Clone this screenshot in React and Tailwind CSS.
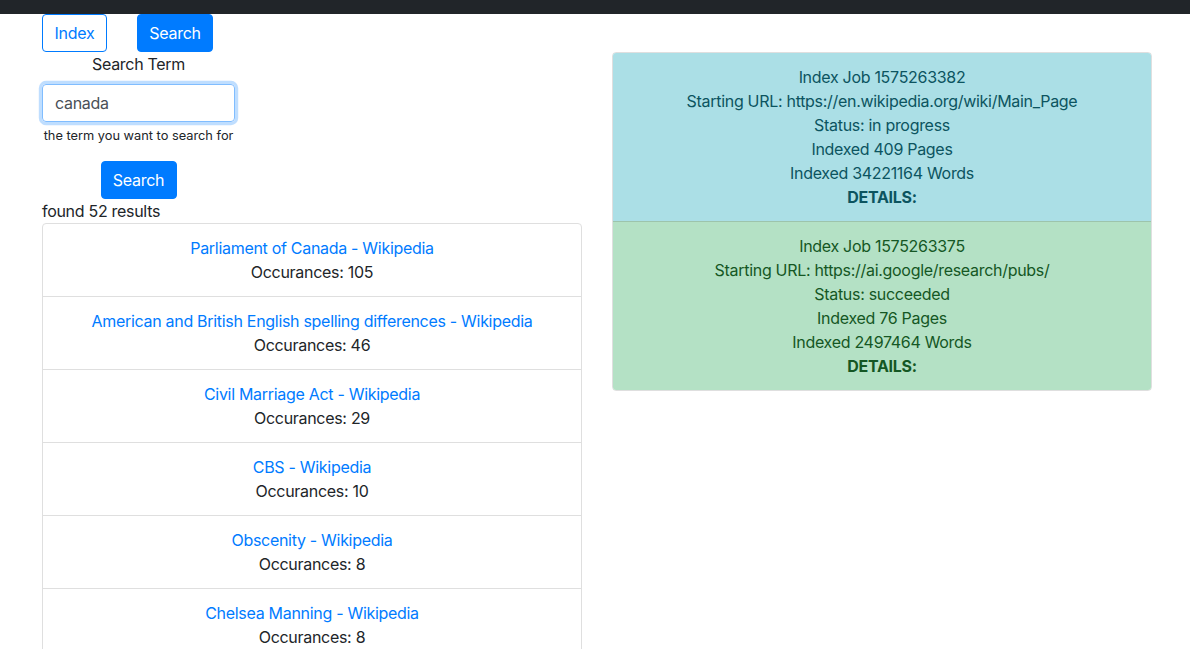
import React from "react";

const results = [
  { title: "Parliament of Canada - Wikipedia", count: 105 },
  { title: "American and British English spelling differences - Wikipedia", count: 46 },
  { title: "Civil Marriage Act - Wikipedia", count: 29 },
  { title: "CBS - Wikipedia", count: 10 },
  { title: "Obscenity - Wikipedia", count: 8 },
  { title: "Chelsea Manning - Wikipedia", count: 8 },
];

const jobs = [
  {
    id: 1575263382,
    url: "https://en.wikipedia.org/wiki/Main_Page",
    status: "in progress",
    pages: 409,
    words: 34221164,
    tone: "bg-[#abdfe6] text-[#0c5460]",
  },
  {
    id: 1575263375,
    url: "https://ai.google/research/pubs/",
    status: "succeeded",
    pages: 76,
    words: 2497464,
    tone: "bg-[#b4e1c5] text-[#155724]",
  },
];

export default function App() {
  return (
    <div className="min-h-screen bg-white text-[#212529] text-base leading-6 tracking-[-0.3px] font-['Inter','Helvetica_Neue',Arial,sans-serif]">
      <div className="h-[14px] bg-[#212529]" />

      <div className="flex gap-[30px] pl-[42px]">
        {/* left column */}
        <div className="w-[540px] shrink-0">
          <div className="flex gap-[30px]">
            <button className="w-[65px] h-[38px] border border-[#007bff] text-[#007bff] rounded-[4px] bg-white">
              Index
            </button>
            <button className="w-[76px] h-[38px] border border-[#007bff] text-white rounded-[4px] bg-[#007bff]">
              Search
            </button>
          </div>

          <form className="w-[193px] text-center" onSubmit={(e) => e.preventDefault()}>
            <label className="block mb-2">Search Term</label>
            <input
              defaultValue="canada"
              className="block w-full h-[38px] px-3 border border-[#80bdff] rounded-[4px] text-[#495057] outline-none shadow-[0_0_0_3.2px_rgba(0,123,255,0.25)]"
            />
            <small className="block mt-1 text-[12.8px] leading-[19px] tracking-normal whitespace-nowrap">
              the term you want to search for
            </small>
            <div className="mt-4">
              <button className="w-[76px] h-[38px] border border-[#007bff] text-white rounded-[4px] bg-[#007bff]">
                Search
              </button>
            </div>
          </form>

          <div>found 52 results</div>

          <ul className="border border-[#dfdfdf] rounded-t-[4px]">
            {results.map((r, i) => (
              <li
                key={r.title}
                className={`text-center py-3 px-5 ${i > 0 ? "border-t border-[#dfdfdf]" : ""}`}
              >
                <a href="#" className="text-[#007bff]">{r.title}</a>
                <div>Occurances: {r.count}</div>
              </li>
            ))}
          </ul>
        </div>

        {/* right column */}
        <div className="w-[540px] shrink-0 pt-[38px]">
          <ul className="rounded-[4px] overflow-hidden border border-[rgba(0,0,0,0.125)]">
            {jobs.map((j, i) => (
              <li
                key={j.id}
                className={`text-center py-3 px-5 ${j.tone} ${i > 0 ? "border-t border-[rgba(0,0,0,0.125)]" : ""}`}
              >
                <div>Index Job {j.id}</div>
                <div>Starting URL: {j.url}</div>
                <div>Status: {j.status}</div>
                <div>Indexed {j.pages} Pages</div>
                <div>Indexed {j.words} Words</div>
                <div className="font-bold">DETAILS:</div>
              </li>
            ))}
          </ul>
        </div>
      </div>
    </div>
  );
}
